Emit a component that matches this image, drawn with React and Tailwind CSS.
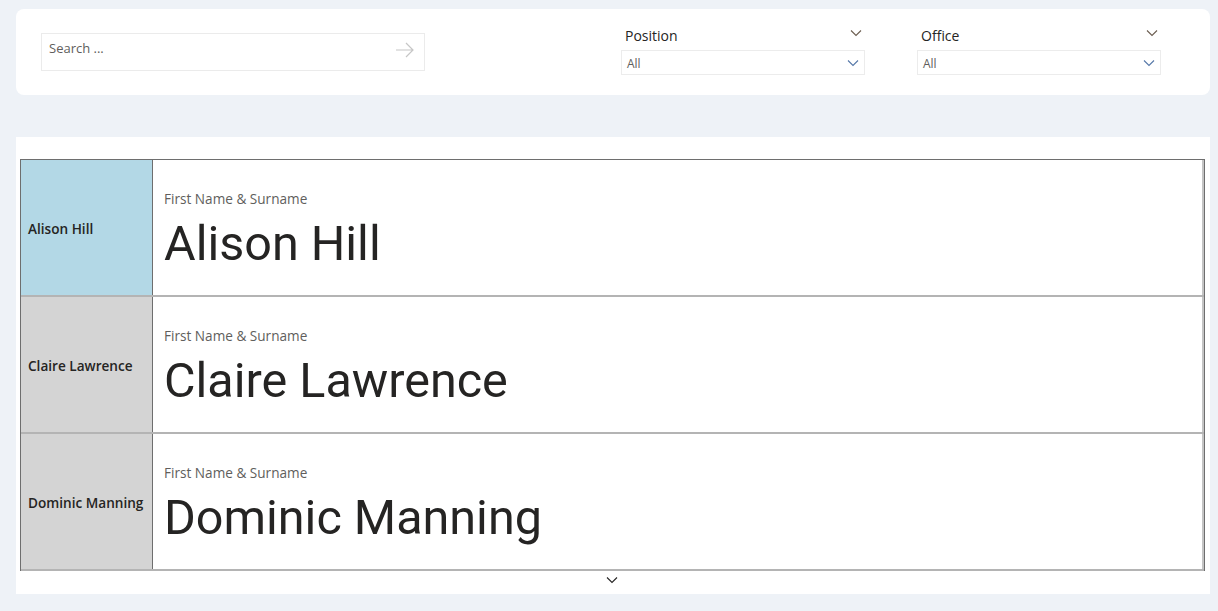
import React from "react";

const people = [
  { name: "Alison Hill", selected: true },
  { name: "Claire Lawrence", selected: false },
  { name: "Dominic Manning", selected: false },
];

function Chevron({ className, color = "#605e5c" }) {
  return (
    <svg width="12" height="8" viewBox="0 0 12 8" className={className} fill="none">
      <path d="M1 1.5l5 5 5-5" stroke={color} strokeWidth="1.1" />
    </svg>
  );
}

function Filter({ label }) {
  return (
    <div className="w-[244px] flex flex-col">
      <div className="flex items-center justify-between h-[21px] pl-[4px] pr-[3px]">
        <span className="text-[14px] text-[#252423]">{label}</span>
        <Chevron className="-mt-[6px]" color="#6b5d50" />
      </div>
      <div className="mt-[4px] h-[25px] border border-[#ececec] flex items-center justify-between pl-[5px] pr-[5px]">
        <span className="text-[12px] text-[#605e5c] pt-[2px]">All</span>
        <Chevron color="#5577a8" />
      </div>
    </div>
  );
}

export default function App() {
  return (
    <div
      className="min-h-[611px] bg-[#eef2f7] pl-[16px] pr-[8px] pt-[9px] pb-[17px]"
      style={{ fontFamily: '"Open Sans", "Noto Sans", sans-serif' }}
    >
      {/* Filters */}
      <div className="bg-white rounded-[8px] h-[86px] flex items-start">
        <div className="ml-[25px] mt-[24px] w-[384px] h-[38px] border border-[#ebebeb] flex items-center justify-between pl-[7px] pr-[9px] pb-[7px]">
          <span className="text-[13px] text-[#605e5c]">Search ...</span>
          <svg width="20" height="16" viewBox="0 0 20 16" fill="none" className="mt-[2px]">
            <path d="M1 8h17M11 1l7 7-7 7" stroke="#c6c6c6" strokeWidth="1.2" />
          </svg>
        </div>
        <div className="ml-[196px] mt-[16px]">
          <Filter label="Position" />
        </div>
        <div className="ml-[52px] mt-[16px]">
          <Filter label="Office" />
        </div>
      </div>

      {/* Cards */}
      <div className="mt-[42px] bg-white h-[457px] pt-[22px] pl-[4px] pr-[5px]">
        <div className="border-t border-l border-r border-[#6e6e6e]">
          {people.map((p) => (
            <div key={p.name} className="flex h-[137px] border-b-2 border-[#b4b4b4]">
              <div
                className={`w-[132px] shrink-0 border-r border-[#6e6e6e] flex items-center pl-[7px] pt-[3px] ${
                  p.selected ? "bg-[#b3d8e6]" : "bg-[#d4d4d4]"
                }`}
              >
                <span className="text-[13.6px] font-semibold text-[#252423]">{p.name}</span>
              </div>
              <div className="flex-1 border-r-2 border-[#c4c4c4] pl-[11px] pt-[30px]">
                <div className="text-[13.6px] text-[#605e5c] leading-[18px]">First Name &amp; Surname</div>
                <div
                  className="text-[48.5px] text-[#252423] leading-[56px] mt-[8px]"
                  style={{ fontFamily: "Roboto, sans-serif" }}
                >
                  {p.name}
                </div>
              </div>
            </div>
          ))}
        </div>
        <div className="flex justify-center mt-[5px] pr-[2px]">
          <Chevron color="#252423" />
        </div>
      </div>
    </div>
  );
}
